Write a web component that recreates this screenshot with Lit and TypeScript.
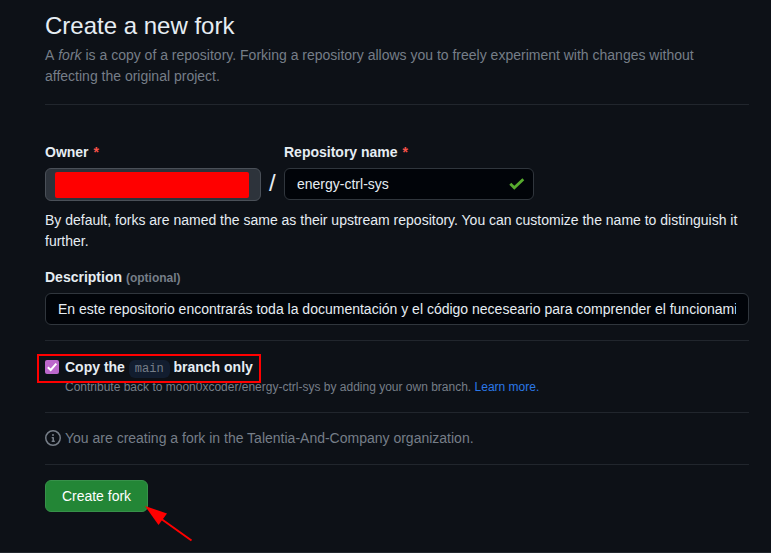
import { LitElement, html, css } from "lit";
import { customElement } from "lit/decorators.js";

@customElement("app-root")
export class AppRoot extends LitElement {
  static styles = css`
    :host {
      display: block;
      box-sizing: border-box;
      position: relative;
      height: 553px;
      padding: 8px 22px 0 45px;
      overflow: hidden;
      background: #0d1117;
      border-bottom: 1px solid #21262d;
      color: #e6edf3;
      font: 14px/21px "Liberation Sans", Arial, sans-serif;
    }
    * { box-sizing: border-box; }
    h1 { margin: 0 0 1px; font-size: 24px; line-height: 36px; font-weight: 400; }
    p { margin: 0; }
    .muted { color: #767e88; }
    .header { height: 97px; border-bottom: 1px solid #21262d; }
    .article { font-kerning: none; }
    .names { display: flex; margin-top: 37px; }
    .label { display: block; height: 26px; font-weight: 700; }
    .required { color: #f85149; margin-left: 1px; }
    .owner { width: 216px; }
    .owner-button {
      display: block;
      width: 216px;
      height: 33px;
      padding: 3px 11px 2px 9px;
      background: #2d333b;
      border: 1px solid #4a5058;
      border-radius: 6px;
    }
    .redaction { display: block; width: 194px; height: 26px; border-radius: 2px; background: #f00; }
    .slash { width: 23px; padding: 26px 0 0 8px; font-size: 24px; line-height: 30px; }
    .field {
      display: flex;
      align-items: center;
      height: 32px;
      padding: 0 12px;
      background: #010409;
      border: 1px solid #30363d;
      border-radius: 6px;
      white-space: nowrap;
    }
    .repo { width: 250px; justify-content: space-between; padding-right: 8px; }
    .hint { margin-top: 9px; }
    .description { margin-top: 15px; padding-bottom: 15px; border-bottom: 1px solid #21262d; }
    .optional { font-size: 12px; color: #767e88; }
    .clip { overflow: hidden; }
    .branch { height: 72px; padding-top: 16px; border-bottom: 1px solid #21262d; }
    .choice { display: flex; height: 21px; font-weight: 700; }
    .checkbox {
      width: 14px;
      height: 14px;
      margin: 3px 6px 0 0;
      border-radius: 2px;
      background: #bc67cb;
    }
    .checkbox svg, .tick, .info { display: block; }
    code {
      padding: 2.4px 6px;
      border-radius: 6px;
      background: #121d2f;
      color: #767e88;
      font: 400 12px "Liberation Mono", monospace;
    }
    .caption { padding-left: 20px; font-size: 12px; line-height: 18px; color: #767e88; }
    .link { color: #2b78e8; }
    .notice {
      display: flex;
      align-items: center;
      gap: 4px;
      height: 52px;
      border-bottom: 1px solid #21262d;
    }
    .info { margin-bottom: 1px; }
    .submit {
      display: block;
      width: 103px;
      height: 32px;
      margin-top: 15px;
      padding: 0;
      border: 1px solid #37914a;
      border-radius: 6px;
      background: #238636;
      color: #fff;
      font: 14px "Liberation Sans", Arial, sans-serif;
    }
    .highlight {
      position: absolute;
      left: 37px;
      top: 354px;
      width: 224px;
      height: 29px;
      border: 2px solid #f00;
    }
    .arrow { position: absolute; left: 144px; top: 504px; }
  `;

  render() {
    return html`
      <header class="header">
        <h1>Create a new fork</h1>
        <p class="muted"><span class="article">A </span><em>fork</em> is a copy of a repository. Forking a repository allows you to freely experiment with changes without affecting the original project.</p>
      </header>

      <div class="names">
        <div class="owner">
          <span class="label">Owner <span class="required">*</span></span>
          <span class="owner-button"><span class="redaction"></span></span>
        </div>
        <span class="slash">/</span>
        <div>
          <span class="label">Repository name <span class="required">*</span></span>
          <div class="field repo">
            <span>energy-ctrl-sys</span>
            <svg class="tick" width="16" height="12" viewBox="0 0 16 12">
              <path d="M1.3 5.8 5.3 9.8 14.3 1.3" fill="none" stroke="#57ab2e" stroke-width="2.8" />
            </svg>
          </div>
        </div>
      </div>
      <p class="hint">By default, forks are named the same as their upstream repository. You can customize the name to distinguish it further.</p>

      <div class="description">
        <span class="label">Description <span class="optional">(optional)</span></span>
        <div class="field"><span class="clip">En este repositorio encontrarás toda la documentación y el código neceseario para comprender el funcionamiento</span></div>
      </div>

      <div class="branch">
        <div class="choice">
          <span class="checkbox">
            <svg width="14" height="14" viewBox="0 0 14 14">
              <path d="M2.8 7.2 5.7 10 11.3 3.7" fill="none" stroke="#fff" stroke-width="2" />
            </svg>
          </span>
          <span>Copy the <code>main</code> branch only</span>
        </div>
        <p class="caption">Contribute back to moon0xcoder/energy-ctrl-sys by adding your own branch. <span class="link">Learn more.</span></p>
      </div>

      <div class="notice muted">
        <svg class="info" width="16" height="16" viewBox="0 0 16 16" fill="currentColor">
          <path d="M0 8a8 8 0 1 1 16 0A8 8 0 0 1 0 8Zm8-6.5a6.5 6.5 0 1 0 0 13 6.5 6.5 0 0 0 0-13ZM6.5 7.75A.75.75 0 0 1 7.25 7h1a.75.75 0 0 1 .75.75v2.75h.25a.75.75 0 0 1 0 1.5h-2a.75.75 0 0 1 0-1.5h.25v-2h-.25a.75.75 0 0 1-.75-.75ZM8 6a1 1 0 1 1 0-2 1 1 0 0 1 0 2Z" />
        </svg>
        <span>You are creating a fork in the Talentia-And-Company organization.</span>
      </div>

      <button class="submit">Create fork</button>

      <div class="highlight"></div>
      <svg class="arrow" width="50" height="40" viewBox="0 0 50 40">
        <path d="M16 14 47.5 36.5" stroke="#f00" stroke-width="2" />
        <path d="M1 2 23 9.5 14.5 21Z" fill="#f00" />
      </svg>
    `;
  }
}
